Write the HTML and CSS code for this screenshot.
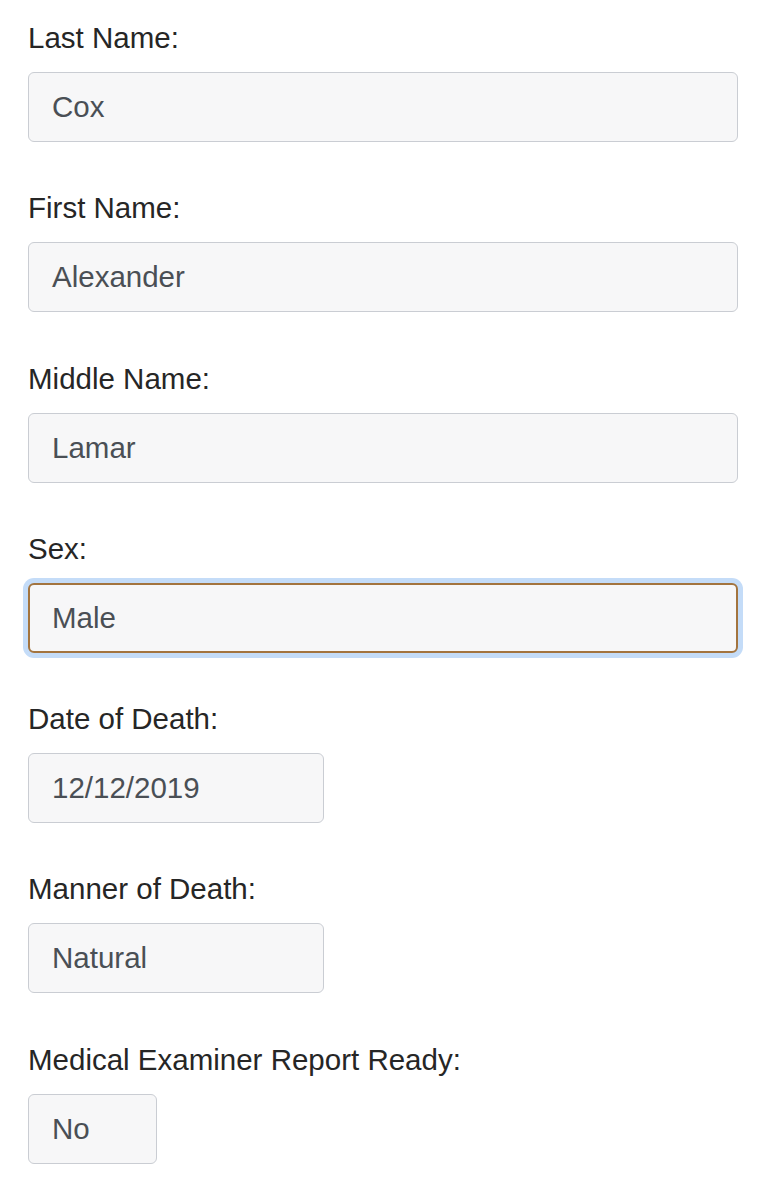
FILE: index.html
```html
<!DOCTYPE html>
<html>
<head>
<meta charset="utf-8">
<link rel="stylesheet" href="styles.css">
</head>
<body>
<form class="form">
  <div class="group">
    <label class="label">Last Name:</label>
    <div class="field field-full">Cox</div>
  </div>
  <div class="group">
    <label class="label">First Name:</label>
    <div class="field field-full">Alexander</div>
  </div>
  <div class="group">
    <label class="label">Middle Name:</label>
    <div class="field field-full">Lamar</div>
  </div>
  <div class="group">
    <label class="label">Sex:</label>
    <div class="field field-full field-focus">Male</div>
  </div>
  <div class="group">
    <label class="label">Date of Death:</label>
    <div class="field field-mid">12/12/2019</div>
  </div>
  <div class="group">
    <label class="label">Manner of Death:</label>
    <div class="field field-mid">Natural</div>
  </div>
  <div class="group">
    <label class="label">Medical Examiner Report Ready:</label>
    <div class="field field-small">No</div>
  </div>
</form>
</body>
</html>
```

FILE: styles.css
```css
html, body {
  margin: 0;
  padding: 0;
  background: #ffffff;
}

body {
  font-family: "Liberation Sans", Arial, sans-serif;
  font-size: 29.5px;
  color: #212529;
}

.form {
  padding: 14px 0 0 28px;
  width: 710px;
}

.group {
  margin-bottom: 42.3px;
}

.label {
  display: block;
  line-height: 44px;
  padding-top: 2px;
  margin-bottom: 12px;
  color: #262626;
}

.field {
  box-sizing: border-box;
  height: 70px;
  line-height: 68px;
  padding: 0 23px;
  border: 1px solid #cacdd3;
  border-radius: 6px;
  background: #f7f7f8;
  color: #4a4f55;
}

.field-full {
  width: 710px;
}

.field-mid {
  width: 296px;
}

.field-small {
  width: 129px;
}

.field-focus {
  border: 2px solid #a3743f;
  line-height: 66px;
  padding-left: 22px;
  box-shadow: 0 0 0 5px #c4dcf8;
}
```
